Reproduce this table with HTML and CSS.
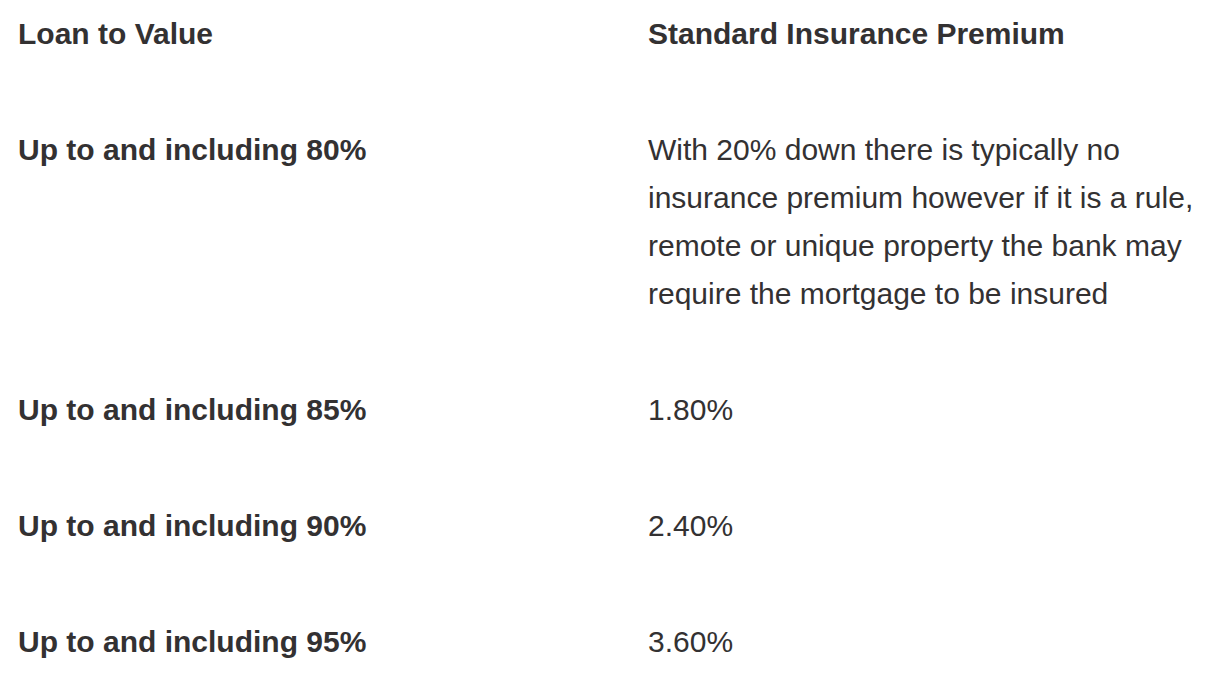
FILE: index.html
```html
<!DOCTYPE html>
<html lang="en">
<head>
<meta charset="utf-8">
<title>Loan to Value</title>
<link rel="stylesheet" href="styles.css">
</head>
<body>
<div class="ltv-table">
  <div class="cell head">Loan to Value</div>
  <div class="cell head">Standard Insurance Premium</div>

  <div class="cell label">Up to and including 80%</div>
  <div class="cell value">With 20% down there is typically no insurance premium however if it is a rule, remote or unique property the bank may require the mortgage to be insured</div>

  <div class="cell label">Up to and including 85%</div>
  <div class="cell value">1.80%</div>

  <div class="cell label">Up to and including 90%</div>
  <div class="cell value">2.40%</div>

  <div class="cell label">Up to and including 95%</div>
  <div class="cell value">3.60%</div>
</div>
</body>
</html>
```

FILE: styles.css
```css
html, body {
  margin: 0;
  padding: 0;
  background: #ffffff;
}

body {
  font-family: "Liberation Sans", Arial, Helvetica, sans-serif;
  font-size: 30px;
  line-height: 48px;
  color: #333132;
}

.ltv-table {
  display: grid;
  grid-template-columns: 630px 560px;
  row-gap: 68px;
  padding: 10px 0 0 18px;
}

.cell {
  margin: 0;
}

.head,
.label {
  font-weight: bold;
}

.value {
  font-weight: normal;
}
```
